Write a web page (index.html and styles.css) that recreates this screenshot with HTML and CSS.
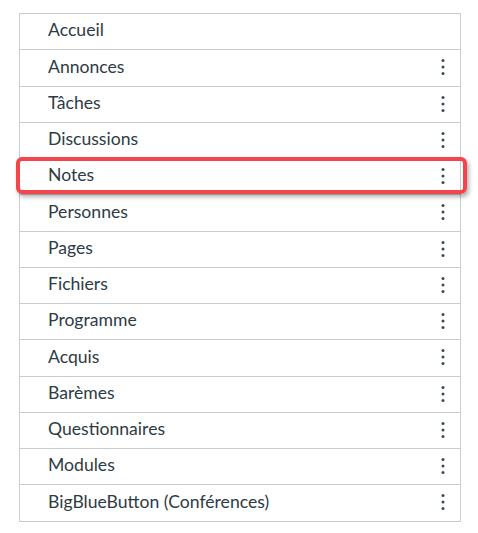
FILE: index.html
```html
<!DOCTYPE html>
<html lang="fr">
<head>
  <meta charset="UTF-8">
  <title>Navigation du cours</title>
  <link rel="stylesheet" href="styles.css">
</head>
<body>

  <ul class="nav-list">
    <li class="nav-item"><span class="nav-label">Accueil</span></li>
    <li class="nav-item"><span class="nav-label">Annonces</span><span class="kebab"></span></li>
    <li class="nav-item"><span class="nav-label">Tâches</span><span class="kebab"></span></li>
    <li class="nav-item"><span class="nav-label">Discussions</span><span class="kebab"></span></li>
    <li class="nav-item highlighted"><span class="nav-label">Notes</span><span class="kebab"></span></li>
    <li class="nav-item"><span class="nav-label">Personnes</span><span class="kebab"></span></li>
    <li class="nav-item"><span class="nav-label">Pages</span><span class="kebab"></span></li>
    <li class="nav-item"><span class="nav-label">Fichiers</span><span class="kebab"></span></li>
    <li class="nav-item"><span class="nav-label">Programme</span><span class="kebab"></span></li>
    <li class="nav-item"><span class="nav-label">Acquis</span><span class="kebab"></span></li>
    <li class="nav-item"><span class="nav-label">Barèmes</span><span class="kebab"></span></li>
    <li class="nav-item"><span class="nav-label">Questionnaires</span><span class="kebab"></span></li>
    <li class="nav-item"><span class="nav-label">Modules</span><span class="kebab"></span></li>
    <li class="nav-item"><span class="nav-label">BigBlueButton (Conférences)</span><span class="kebab"></span></li>
  </ul>

  <script>
    // same three-dot menu icon on every row that has one
    const kebabSvg =
      '<svg width="6" height="18" viewBox="0 0 6 18">' +
      '<circle cx="3" cy="2.6" r="1.5"/>' +
      '<circle cx="3" cy="9" r="1.5"/>' +
      '<circle cx="3" cy="15.4" r="1.5"/>' +
      '</svg>';

    document.querySelectorAll(".kebab").forEach(el => {
      el.innerHTML = kebabSvg;
    });
  </script>

</body>
</html>
```

FILE: styles.css
```css
body {
  margin: 0;
  padding: 13px 0 0 19px;
  background-color: #fff;
  font-family: Lato, "Open Sans", sans-serif;
}

.nav-list {
  list-style: none;
  margin: 0;
  padding: 0;
  width: 442px;
  box-sizing: border-box;
  border: 1px solid #c7cdd1;
  border-bottom: none;
}

.nav-item {
  position: relative;
  display: flex;
  align-items: center;
  justify-content: space-between;
  box-sizing: border-box;
  height: 36.26px;
  padding: 0 14px 0 28px;
  border-bottom: 1px solid #c7cdd1;
  font-size: 17.6px;
  color: #2d3b45;
}

.nav-label {
  line-height: 1;
  margin-top: -3px;
}

.kebab {
  display: flex;
  margin-top: -1px;
  fill: #394b58;
}

.highlighted::after {
  content: "";
  position: absolute;
  top: -2px;
  left: -4px;
  right: -7px;
  bottom: 0;
  border: 4px solid #f2454c;
  border-radius: 6px;
  box-shadow: 2px 3px 4px rgba(0, 0, 0, 0.3);
  pointer-events: none;
}
```
